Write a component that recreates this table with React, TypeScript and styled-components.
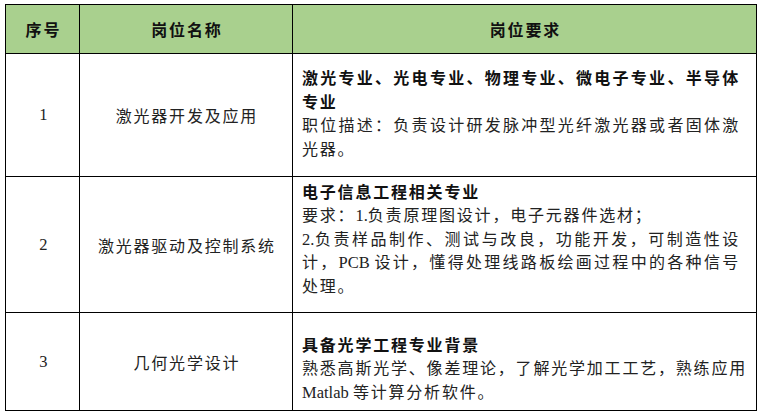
import React from "react";
import styled, { createGlobalStyle } from "styled-components";

const Global = createGlobalStyle`
  html, body { margin: 0; padding: 0; background: #ffffff; }
  body {
    font-family: "Liberation Serif", "Noto Sans CJK SC", serif;
    color: #222;
  }
`;

const Page = styled.div`
  width: 763px;
  height: 417px;
  box-sizing: border-box;
  padding: 4px 0 0 5px;
  background: #fff;
`;

const Table = styled.div`
  display: grid;
  grid-template-columns: 74px 213px 464px;
  grid-template-rows: 49px 123px 136px 98px;
  width: 752px;
  box-sizing: border-box;
  border-left: 1px solid #000;
  border-top: 1px solid #000;
`;

const Cell = styled.div<{ $head?: boolean }>`
  box-sizing: border-box;
  border-right: 1px solid #000;
  border-bottom: 1px solid #000;
  background: ${(p) => (p.$head ? "#a9d08e" : "#ffffff")};
  display: flex;
  align-items: center;
  justify-content: center;
  font-size: 16px;
  letter-spacing: 1.8px;
  padding-left: 1.8px;
  font-weight: ${(p) => (p.$head ? 700 : 400)};
  color: ${(p) => (p.$head ? "#111" : "#222")};
`;

const Latin = styled.span`
  font-family: "Liberation Serif", serif;
  font-size: 16.5px;
  letter-spacing: 0;
`;

const ReqCell = styled.div<{ $top: number; $bottom: number }>`
  box-sizing: border-box;
  border-right: 1px solid #000;
  border-bottom: 1px solid #000;
  display: flex;
  flex-direction: column;
  justify-content: center;
  padding: ${(p) => p.$top}px 16px ${(p) => p.$bottom}px 9px;
  font-size: 16px;
  line-height: 23.5px;
  letter-spacing: 1.8px;
  color: #222;
`;

const Line = styled.div<{ $full?: boolean; $bold?: boolean }>`
  white-space: nowrap;
  text-align: ${(p) => (p.$full ? "justify" : "left")};
  text-align-last: ${(p) => (p.$full ? "justify" : "left")};
  font-weight: ${(p) => (p.$bold ? 700 : 400)};
  color: ${(p) => (p.$bold ? "#111" : "#222")};
`;

function Mixed({ text }: { text: string }) {
  const parts = text.split(/([A-Za-z0-9.]+ ?)/).filter((s) => s.length > 0);
  return (
    <>
      {parts.map((p, i) =>
        /^[A-Za-z0-9.]/.test(p) ? <Latin key={i}>{p}</Latin> : <React.Fragment key={i}>{p}</React.Fragment>
      )}
    </>
  );
}

type Row = {
  no: string;
  name: string;
  top: number;
  bottom: number;
  lines: { text: string; full?: boolean; bold?: boolean }[];
};

const rows: Row[] = [
  {
    no: "1",
    name: "激光器开发及应用",
    top: 0,
    bottom: 2,
    lines: [
      { text: "激光专业、光电专业、物理专业、微电子专业、半导体", full: true, bold: true },
      { text: "专业", bold: true },
      { text: "职位描述：负责设计研发脉冲型光纤激光器或者固体激", full: true },
      { text: "光器。" },
    ],
  },
  {
    no: "2",
    name: "激光器驱动及控制系统",
    top: 0,
    bottom: 10,
    lines: [
      { text: "电子信息工程相关专业", bold: true },
      { text: "要求：1.负责原理图设计，电子元器件选材；" },
      { text: "2.负责样品制作、测试与改良，功能开发，可制造性设", full: true },
      { text: "计，PCB 设计，懂得处理线路板绘画过程中的各种信号", full: true },
      { text: "处理。" },
    ],
  },
  {
    no: "3",
    name: "几何光学设计",
    top: 15,
    bottom: 0,
    lines: [
      { text: "具备光学工程专业背景", bold: true },
      { text: "熟悉高斯光学、像差理论，了解光学加工工艺，熟练应用", full: true },
      { text: "Matlab 等计算分析软件。" },
    ],
  },
];

export default function App() {
  return (
    <Page>
      <Global />
      <Table>
        <Cell $head>序号</Cell>
        <Cell $head>岗位名称</Cell>
        <Cell $head>岗位要求</Cell>
        {rows.map((r) => (
          <React.Fragment key={r.no}>
            <Cell>
              <Latin>{r.no}</Latin>
            </Cell>
            <Cell>{r.name}</Cell>
            <ReqCell $top={r.top} $bottom={r.bottom}>
              {r.lines.map((l, i) => (
                <Line key={i} $full={l.full} $bold={l.bold}>
                  <Mixed text={l.text} />
                </Line>
              ))}
            </ReqCell>
          </React.Fragment>
        ))}
      </Table>
    </Page>
  );
}
